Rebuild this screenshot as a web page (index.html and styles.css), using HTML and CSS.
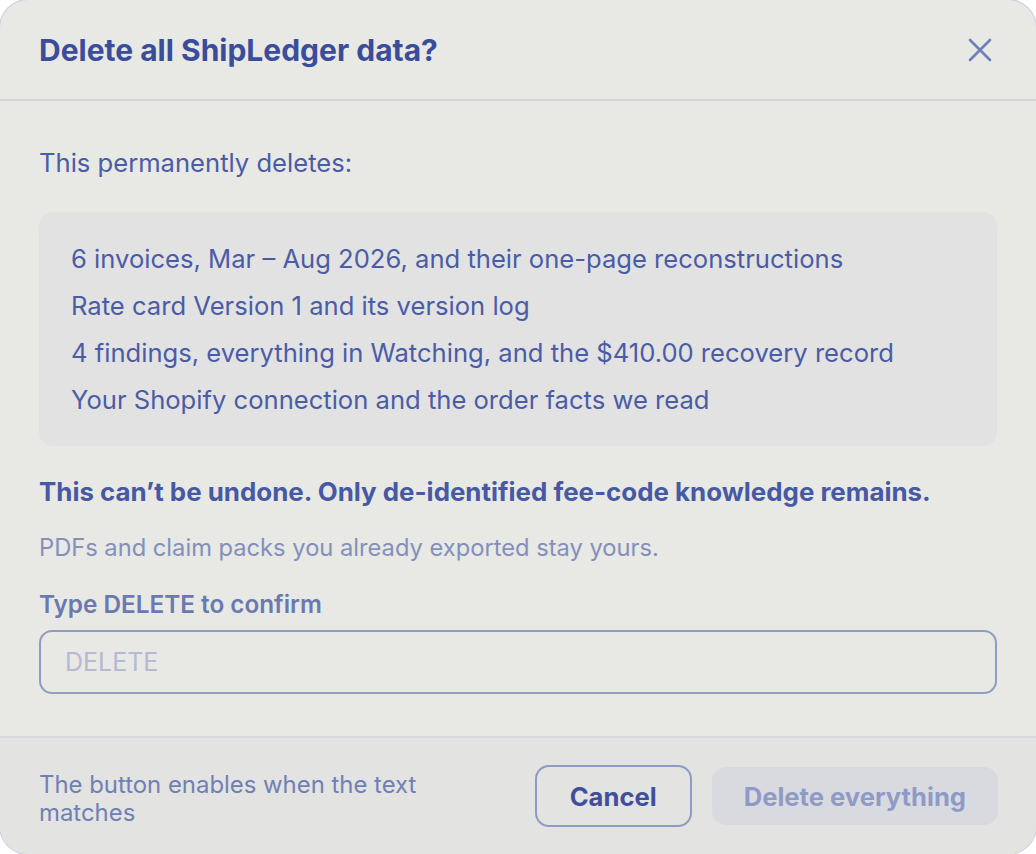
FILE: index.html
```html
<!DOCTYPE html>
<html lang="en">
<head>
  <meta charset="UTF-8">
  <meta name="viewport" content="width=device-width, initial-scale=1.0">
  <title>Delete all ShipLedger data?</title>
  <link rel="stylesheet" href="styles.css">
</head>
<body>
  <div class="dialog" role="dialog" aria-labelledby="dialog-title">
    <div class="dialog-header">
      <h1 id="dialog-title">Delete all ShipLedger data?</h1>
      <button class="close-button" aria-label="Close">
        <svg width="24" height="24" viewBox="0 0 24 24" fill="none" stroke="currentColor" stroke-width="2.7" stroke-linecap="round">
          <path d="M2 2 L22 22 M22 2 L2 22"/>
        </svg>
      </button>
    </div>

    <div class="dialog-body">
      <p class="intro">This permanently deletes:</p>
      <ul class="delete-list">
        <li>6 invoices, Mar – Aug 2026, and their one-page reconstructions</li>
        <li>Rate card Version 1 and its version log</li>
        <li>4 findings, everything in Watching, and the $410.00 recovery record</li>
        <li>Your Shopify connection and the order facts we read</li>
      </ul>
      <p class="warning">This can’t be undone. Only de-identified fee-code knowledge remains.</p>
      <p class="note">PDFs and claim packs you already exported stay yours.</p>
      <label class="confirm-label" for="confirmInput">Type DELETE to confirm</label>
      <input id="confirmInput" class="confirm-input" type="text" placeholder="DELETE" autocomplete="off">
    </div>

    <div class="dialog-footer">
      <p class="footer-hint">The button enables when the text matches</p>
      <div class="footer-actions">
        <button class="btn btn-cancel">Cancel</button>
        <button id="deleteButton" class="btn btn-danger" disabled>Delete everything</button>
      </div>
    </div>
  </div>

  <script>
    const input = document.getElementById('confirmInput');
    const deleteButton = document.getElementById('deleteButton');
    input.addEventListener('input', () => {
      deleteButton.disabled = input.value !== 'DELETE';
    });
  </script>
</body>
</html>
```

FILE: styles.css
```css
* {
  box-sizing: border-box;
}
body {
  margin: 0;
  padding: 0;
  background-color: #ffffff;
  font-family: Inter, 'Noto Sans', sans-serif;
  color: #4a5ca6;
}
.dialog {
  width: 1036px;
  height: 854px;
  background-color: #e8e8e4;
  border-radius: 28px;
  box-shadow: 0 0 0 1px #c9cfe0;
  overflow: hidden;
  display: flex;
  flex-direction: column;
}
.dialog-header {
  height: 101px;
  flex-shrink: 0;
  display: flex;
  align-items: center;
  justify-content: space-between;
  padding: 0 44px 0 39px;
  border-bottom: 2px solid #d3d5dd;
}
h1 {
  margin: 0;
  font-size: 30px;
  font-weight: 700;
  color: #394d9b;
}
.close-button {
  background: none;
  border: none;
  padding: 0;
  cursor: pointer;
  color: #6f80b6;
  display: flex;
}
.dialog-body {
  flex-grow: 1;
  padding: 47px 39px 0 39px;
  display: flex;
  flex-direction: column;
}
.intro {
  margin: 0 0 34px 0;
  font-size: 25.6px;
  line-height: 30px;
}
.delete-list {
  list-style: none;
  margin: 0;
  padding: 30px 32px;
  background-color: #e2e2e2;
  border-radius: 14px;
  display: flex;
  flex-direction: column;
  gap: 14px;
}
.delete-list li {
  font-size: 25.6px;
  line-height: 33px;
}
.warning {
  margin: 31px 0 0 0;
  font-size: 25.9px;
  line-height: 30px;
  font-weight: 650;
  color: #4759a3;
}
.note {
  margin: 26px 0 0 0;
  font-size: 23.7px;
  line-height: 30px;
  color: #8390bc;
}
.confirm-label {
  margin-top: 26px;
  font-size: 24.3px;
  line-height: 30px;
  font-weight: 600;
  color: #6a79b0;
}
.confirm-input {
  margin-top: 11px;
  height: 64px;
  width: 100%;
  border: 2px solid #909cc2;
  border-radius: 13px;
  background-color: transparent;
  padding: 0 24px;
  font-family: inherit;
  font-size: 25px;
  color: #4a5ca6;
  outline: none;
}
.confirm-input::placeholder {
  color: #b4bad0;
}
.dialog-footer {
  height: 118px;
  flex-shrink: 0;
  border-top: 2px solid #d6d7db;
  background-color: #e3e3e2;
  display: flex;
  align-items: center;
  justify-content: space-between;
  padding: 0 38px 0 39px;
}
.footer-hint {
  margin: 5px 0 0 0;
  width: 430px;
  font-size: 23.9px;
  line-height: 28px;
  color: #7080b4;
}
.footer-actions {
  display: flex;
  align-items: center;
  gap: 20px;
}
.btn {
  font-family: inherit;
  font-size: 25.6px;
  font-weight: 700;
  border-radius: 14px;
  cursor: pointer;
}
.btn-cancel {
  height: 62px;
  padding: 0 33px;
  background-color: transparent;
  border: 2px solid #8e9bc2;
  color: #3f4f9a;
}
.btn-danger {
  height: 58px;
  padding: 0 32px;
  background-color: #d8dae0;
  border: none;
  color: #8f9bc6;
}
.btn-danger:disabled {
  cursor: not-allowed;
}
```
